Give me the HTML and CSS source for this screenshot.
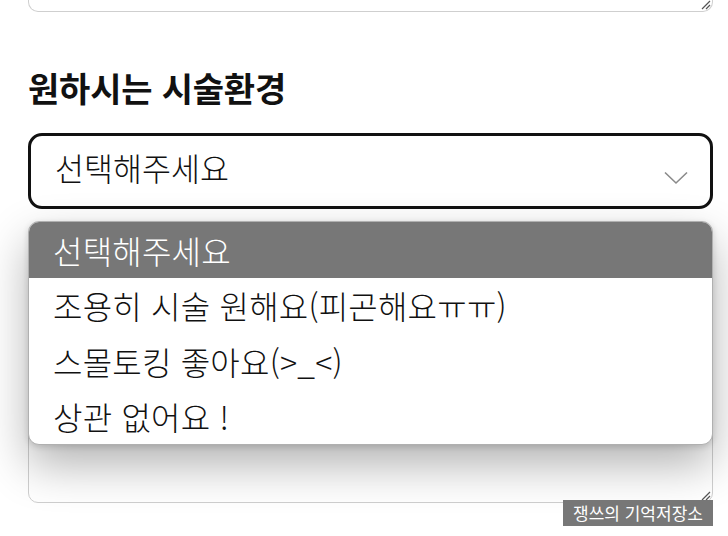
FILE: index.html
```html
<!DOCTYPE html>
<html lang="ko">
<head>
<meta charset="utf-8">
<link rel="stylesheet" href="styles.css">
</head>
<body>
<div class="page">
  <div class="ta ta-top">
    <svg class="grip" width="12" height="12" viewBox="0 0 12 12"><path d="M11 3 L3 11 M11 7 L7 11" stroke="#555" stroke-width="1.2" fill="none"/></svg>
  </div>
  <h2 class="heading">원하시는 시술환경</h2>
  <div class="field">
    <div class="select">
      <span class="select-text">선택해주세요</span>
      <svg class="chev" width="24" height="14" viewBox="0 0 24 14"><path d="M1 1.5 L12 12 L23 1.5" stroke="#8a8a8a" stroke-width="1.6" fill="none"/></svg>
    </div>
    <ul class="menu">
      <li class="opt active">선택해주세요</li>
      <li class="opt">조용히 시술 원해요(피곤해요ㅠㅠ)</li>
      <li class="opt">스몰토킹 좋아요(&gt;_&lt;)</li>
      <li class="opt">상관 없어요 !</li>
    </ul>
  </div>
  <div class="ta ta-bottom">
    <svg class="grip" width="12" height="12" viewBox="0 0 12 12"><path d="M11 3 L3 11 M11 7 L7 11" stroke="#555" stroke-width="1.2" fill="none"/></svg>
  </div>
  <div class="watermark">쟁쓰의 기억저장소</div>
</div>
</body>
</html>
```
FILE: styles.css
```css
html, body {
  margin: 0;
  padding: 0;
  background: #fff;
}
body {
  font-family: "Noto Sans CJK KR", "Noto Sans", sans-serif;
  color: #111;
  width: 728px;
  height: 536px;
  overflow: hidden;
}
.page {
  position: relative;
  padding: 0 15px 0 28px;
  height: 536px;
  box-sizing: border-box;
}
.ta {
  position: relative;
  border: 1px solid #cfcfcf;
  border-radius: 10px;
  box-sizing: border-box;
}
.ta-top {
  height: 12px;
  border-top: none;
  border-top-left-radius: 0;
  border-top-right-radius: 0;
}
.grip {
  position: absolute;
  right: 1px;
  bottom: 1px;
}
.heading {
  margin: 56px 0 0 0;
  font-size: 34px;
  font-weight: 700;
  line-height: 40px;
  letter-spacing: -0.2px;
}
.field {
  position: relative;
  margin-top: 25px;
}
.select {
  height: 76px;
  border: 3px solid #111;
  border-radius: 14px;
  box-sizing: border-box;
  display: flex;
  align-items: center;
  justify-content: space-between;
  padding: 0 22px 0 24px;
}
.select-text {
  font-size: 31.5px;
  font-weight: 300;
  line-height: 1;
  margin-top: -6px;
}
.chev {
  margin-top: 14px;
}
.menu {
  position: absolute;
  left: 0;
  right: 0;
  top: 88px;
  margin: 0;
  padding: 0;
  list-style: none;
  background: #fff;
  border: 1px solid #b0b0b0;
  border-radius: 11px;
  overflow: hidden;
  z-index: 2;
  box-shadow: 0 20px 46px rgba(0, 0, 0, 0.3), 0 2px 6px rgba(0, 0, 0, 0.14);
}
.opt {
  height: 55.5px;
  display: flex;
  align-items: center;
  padding-left: 24px;
  font-size: 32px;
  font-weight: 300;
  letter-spacing: 0.2px;
  color: #111;
}
.opt.active {
  background: #777;
  color: #fff;
}
.ta-bottom {
  margin-top: 110px;
  height: 184px;
  background: #fff;
}
.watermark {
  position: absolute;
  right: 15px;
  top: 500px;
  width: 150px;
  height: 26px;
  background: #777;
  color: #fff;
  font-size: 17px;
  line-height: 26px;
  text-align: center;
  z-index: 3;
}
```
